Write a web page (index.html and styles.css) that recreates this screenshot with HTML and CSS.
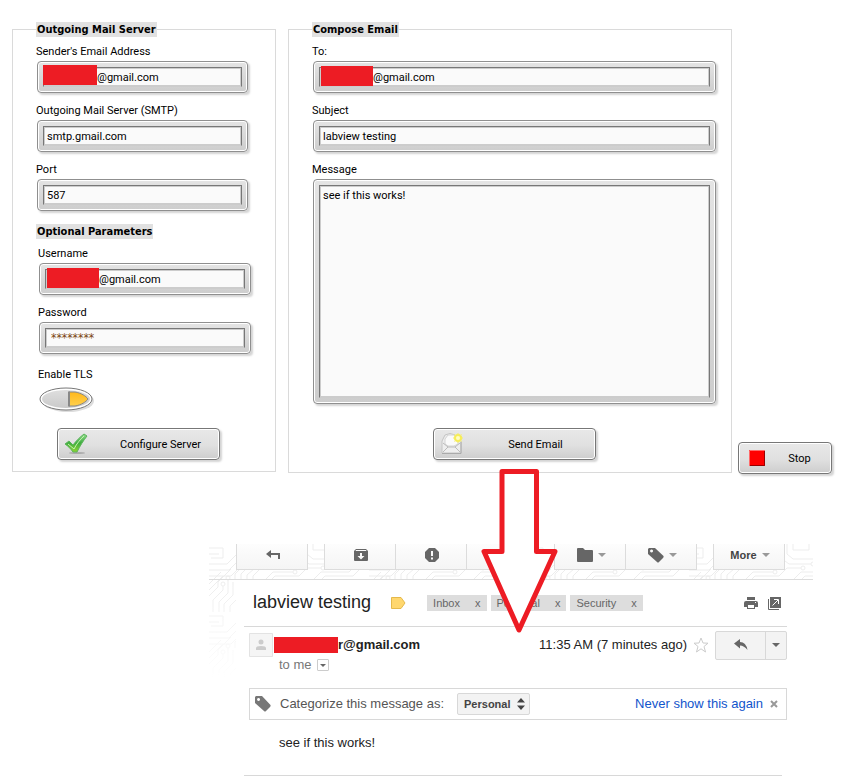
FILE: index.html
```html
<!DOCTYPE html>
<html lang="en">
<head>
    <meta charset="UTF-8">
    <meta name="viewport" content="width=device-width, initial-scale=1.0">
    <title>Email Client</title>
    <link rel="stylesheet" href="styles.css">
</head>
<body>

    <form class="client">
        <!-- Server settings -->
        <fieldset class="panel server">
            <legend>Outgoing Mail Server</legend>
            <label for="sender">Sender's Email Address</label>
            <div class="field wide-redact"><input class="redacted" type="text" id="sender" value="@gmail.com"><span class="redact"></span></div>

            <label for="smtp">Outgoing Mail Server (SMTP)</label>
            <div class="field"><input type="text" id="smtp" value="smtp.gmail.com"></div>

            <label for="port">Port</label>
            <div class="field"><input type="text" id="port" value="587"></div>

            <h3>Optional Parameters</h3>
            <div class="optional">
                <label for="username">Username</label>
                <div class="field"><input class="redacted" type="text" id="username" value="@gmail.com"><span class="redact"></span></div>

                <label for="password">Password</label>
                <div class="field"><input class="secret" type="text" id="password" value="********"></div>

                <label class="tls" for="tls">Enable TLS</label>
                <div class="toggle">
                    <svg width="58" height="28" viewBox="0 0 58 28">
                        <defs>
                            <linearGradient id="metal" x1="0" y1="0" x2="0" y2="1">
                                <stop offset="0" stop-color="#dedede"/><stop offset="1" stop-color="#cacaca"/>
                            </linearGradient>
                            <linearGradient id="amber" x1="0" y1="0" x2="0" y2="1">
                                <stop offset="0" stop-color="#ffb81c"/><stop offset="1" stop-color="#ffd04d"/>
                            </linearGradient>
                        </defs>
                        <ellipse cx="30" cy="14" rx="26" ry="11" fill="#ddd"/>
                        <ellipse cx="28" cy="12" rx="26" ry="11" fill="#fff" stroke="#777"/>
                        <ellipse cx="28" cy="12" rx="24" ry="9" fill="url(#metal)"/>
                        <path d="M31 5V19H37C43 18 48 15 50 12C48 9 43 6 37 5Z" fill="url(#amber)" stroke="#888"/>
                        <path d="M31 4.500V19.500" stroke="#888" stroke-width="2"/>
                    </svg>
                    <input type="checkbox" id="tls" checked>
                </div>
            </div>
            <button class="action" type="button">
                <svg class="check" width="26" height="24" viewBox="0 0 26 24">
                    <defs>
                        <linearGradient id="green" x1="0" y1="0" x2="0" y2="1">
                            <stop offset="0" stop-color="#8fdc8f"/><stop offset="0.500" stop-color="#3fae3f"/><stop offset="1" stop-color="#8fd630"/>
                        </linearGradient>
                    </defs>
                    <ellipse cx="14" cy="21" rx="8" ry="1" fill="#aaa"/>
                    <path d="M2 12L6 9L10 13C13 9 17 5 21 2L24 4C20 9 17 14 14 20L10 20C8 17 5 14 2 12Z" fill="url(#green)" stroke="#5cb35c"/>
                    <path d="M5 12L11 17C14 11 17 8 21 4" fill="none" stroke="#c9f2b0"/>
                </svg>
                <span>Configure Server</span>
            </button>
        </fieldset>

        <!-- Message -->
        <fieldset class="panel compose">
            <legend>Compose Email</legend>
            <label for="to">To:</label>
            <div class="field"><input class="redacted" type="text" id="to" value="@gmail.com"><span class="redact"></span></div>

            <label for="subject">Subject</label>
            <div class="field"><input type="text" id="subject" value="labview testing"></div>

            <label for="message">Message</label>
            <div class="field"><textarea id="message">see if this works!</textarea></div>

            <button class="action" type="button">
                <svg width="24" height="24" viewBox="0 0 24 24">
                    <path d="M3 9L6 3Q11 0 16 3L22 9V21H3Z" fill="#eee" stroke="#c4c4c4"/>
                    <path d="M6 7L9 3H15L19 7V12L15 14H9L6 12Z" fill="#fafafa" stroke="#d4d4d4"/>
                    <path d="M4 11L9 15H16L21 11M4 20L9 15M21 20L16 15" fill="none" stroke="#bbb"/>
                    <path d="M3 21.500H22V10" fill="none" stroke="#aaa"/>
                    <circle cx="19" cy="6" r="4" fill="#f7ee4e"/>
                    <path d="M19 1V11M14 6H24M15.500 2.500L22.500 9.500M22.500 2.500L15.500 9.500" stroke="#f5ec6a"/>
                    <circle cx="19" cy="6" r="2" fill="#fffdc0"/>
                </svg>
                <span>Send Email</span>
            </button>
        </fieldset>

        <button class="action stop" type="button">
            <svg width="16" height="16" viewBox="0 0 16 16">
                <path d="M0 0H16V16H0Z" fill="#f00"/>
                <path d="M15.500 0V15.500H0" fill="none" stroke="#900"/>
                <path d="M0.500 16V0.500H16" fill="none" stroke="#ff6a6a"/>
            </svg>
            <span>Stop</span>
        </button>
    </form>

    <!-- Received mail -->
    <section class="mail">
        <svg class="circuit" width="100%" height="134">
            <defs>
                <pattern id="traces" width="160" height="68" patternUnits="userSpaceOnUse">
                    <g fill="none" stroke="#ededed">
                        <path d="M0 4H14V14H2M0 10H10M0 20H18L28 10V0M0 26H20L32 14V0M0 32H22L36 18V0"/>
                        <path d="M26 36V30L34 22M32 36V30L40 22M38 36V31L46 24M44 36V32L54 22H70"/>
                        <path d="M56 36L64 28H84M62 36L66 32H90L98 24H112M42 0V12L50 18H78L86 10V0M48 0V8L54 13H74L80 7V0"/>
                        <path d="M92 0V14L100 20H122M98 0V10L104 15H128L136 7V0M104 0V6H120V0M104 36L112 28H140L148 20H160"/>
                        <path d="M112 36L116 32H144L152 24H160M142 0V10L150 14H160M148 0V6H160"/>
                        <path d="M0 40L12 28M0 46L14 32M0 52L9 43V38L22 25M4 68V56L14 46V42M10 68V58L19 49V36M15 68V60L24 51V38M21 68V62L27 56"/>
                        <circle cx="41" cy="21" r="2"/><circle cx="35" cy="21" r="2"/><circle cx="48" cy="23" r="2"/><circle cx="72" cy="22" r="2"/>
                        <circle cx="86" cy="28" r="2"/><circle cx="114" cy="24" r="2"/><circle cx="124" cy="20" r="2"/><circle cx="14" cy="40" r="2"/><circle cx="19" cy="34" r="2"/>
                    </g>
                </pattern>
                <linearGradient id="fade" x1="0" y1="0" x2="0" y2="1">
                    <stop offset="0" stop-color="#fff" stop-opacity="0"/><stop offset="1" stop-color="#fff"/>
                </linearGradient>
            </defs>
            <rect width="100%" height="36" fill="url(#traces)"/>
            <rect y="36" width="27" height="98" fill="url(#traces)"/>
            <rect y="36" width="27" height="98" fill="url(#fade)"/>
        </svg>

        <div class="toolbar">
            <div class="tools">
                <button type="button" aria-label="Back"><svg width="14" height="10" viewBox="0 0 14 10"><path d="M0 4L5 0V3H14V9H12V5H5V8Z" fill="#666"/></svg></button>
            </div>
            <div class="tools">
                <button type="button" aria-label="Archive"><svg width="14" height="14" viewBox="0 0 14 14"><path d="M2 1H12L14 3V12Q14 13 13 13H1Q0 13 0 12V3ZM2 2L1.500 3H12.500L12 2ZM6 5V8H3.500L7 11.500L10.500 8H8V5Z" fill="#666" fill-rule="evenodd"/></svg></button>
                <button type="button" aria-label="Report spam"><svg width="14" height="14" viewBox="0 0 14 14"><path d="M4 0H10L14 4V10L10 14H4L0 10V4ZM6 3V8H8V3ZM6 9.500V11.500H8V9.500Z" fill="#666" fill-rule="evenodd"/></svg></button>
                <button type="button" aria-label="Delete"></button>
            </div>
            <div class="tools">
                <button type="button" aria-label="Move to">
                    <svg width="16" height="14" viewBox="0 0 16 14"><path d="M1 0H6L8 2H15Q16 2 16 3V13Q16 14 15 14H1Q0 14 0 13V1Q0 0 1 0Z" fill="#666"/></svg>
                    <i class="caret"></i>
                </button>
                <button type="button" aria-label="Labels">
                    <svg width="16" height="16" viewBox="0 0 16 16"><path d="M1 1H7L15.500 9Q16 10 15 11L11 15Q10 16 9 15L0 7V2ZM3.500 2.500A1.500 1.500 0 1 0 3.600 2.500Z" fill="#666" fill-rule="evenodd"/></svg>
                    <i class="caret"></i>
                </button>
            </div>
            <div class="tools">
                <button type="button">More <i class="caret"></i></button>
            </div>
        </div>

        <div class="subject">
            <h2>labview testing</h2>
            <svg class="marker" width="15" height="12" viewBox="0 0 15 12"><path d="M0.500 0.500H10L14 6L10 11.500H0.500Z" fill="#ffd76e" stroke="#e5b94b"/></svg>
            <div class="chips">
                <a href="#">Inbox <b>x</b></a>
                <a href="#">Personal <b>x</b></a>
                <a href="#">Security <b>x</b></a>
            </div>
            <svg class="print" width="14" height="13" viewBox="0 0 14 13"><path d="M3 0H11V3H3ZM2 4H12Q14 4 14 6V10H11V7H3V10H0V6Q0 4 2 4ZM3 7H11V12H3Z" fill="#666"/><path d="M4 8H10V11H4Z" fill="#fff"/><path d="M11 5H12V6H11Z" fill="#fff"/></svg>
            <svg width="13" height="13" viewBox="0 0 13 13"><path d="M2 0H13V11H2Z" fill="#666"/><path d="M0.500 2V12.500H11" fill="none" stroke="#666"/><path d="M4.500 8.500L10 3M6 2.500H10.500V7" fill="none" stroke="#fff"/></svg>
        </div>

        <div class="sender">
            <svg class="avatar" width="24" height="24" viewBox="0 0 24 24"><path d="M0.500 0.500H23.500V23.500H0.500Z" fill="#f5f5f5" stroke="#e3e3e3"/><circle cx="12" cy="9" r="2.500" fill="#ccc"/><path d="M7 17V15Q7 13 12 13Q17 13 17 15V17Z" fill="#ccc"/></svg>
            <span class="block"></span>
            <strong>r@gmail.com</strong>
            <span class="time">11:35 AM (7 minutes ago)</span>
            <svg class="star" width="16" height="16" viewBox="0 0 16 16"><path d="M8 1L10 6L15 6.200L11 9.500L12.500 15L8 11.800L3.500 15L5 9.500L1 6.200L6 6Z" fill="#fff" stroke="#ccc"/></svg>
            <div class="reply">
                <button type="button" aria-label="Reply"><svg width="14" height="12" viewBox="0 0 14 12"><path d="M0 4.500L6 0V3Q12 3 13.500 11Q10 6.500 6 6.500V9.500Z" fill="#666"/></svg></button>
                <button type="button" aria-label="More replies"><i class="caret"></i></button>
            </div>
        </div>
        <div class="recipient">to me <button type="button" aria-label="Show details"><i class="caret"></i></button></div>

        <div class="categorize">
            <svg width="16" height="16" viewBox="0 0 16 16"><path d="M1 0H7L15.500 9Q16 10 15 11L11 15Q10 16 9 15L0 7V1ZM3.500 2A1.500 1.500 0 1 0 3.600 2Z" fill="#777" fill-rule="evenodd"/></svg>
            <label for="category">Categorize this message as:</label>
            <div class="picker">
                <select id="category"><option>Personal</option></select>
                <svg width="8" height="12" viewBox="0 0 8 12"><path d="M0 4.500L4 0L8 4.500ZM0 7.500L4 12L8 7.500Z" fill="#444"/></svg>
            </div>
            <a href="#">Never show this again</a>
            <button type="button" aria-label="Dismiss"><svg width="8" height="8" viewBox="0 0 8 8"><path d="M1 1L7 7M7 1L1 7" stroke="#999" stroke-width="2"/></svg></button>
        </div>

        <p class="message">see if this works!</p>

        <svg class="arrow" width="80" height="170" viewBox="0 0 80 170"><path d="M22 4.500H56.500V84.500H75L39 163L4 84.500H22Z" fill="#fff" stroke="#ed1c24" stroke-width="5" stroke-linejoin="round"/></svg>
    </section>

</body>
</html>
```

FILE: styles.css
```css
* { box-sizing: border-box; }
body { margin: 0; background: #fff; font: 13px/16px "Liberation Sans", Arial, sans-serif; color: #222; }
button, input, select, textarea { font: inherit; color: inherit; margin: 0; }
svg { display: block; flex: none; }

/* mail client */
.client { display: flex; align-items: flex-start; padding: 22px 18px 0 12px; font: 11px/16px Tahoma, Roboto, sans-serif; color: #000; }
.panel { margin: 0; border: 1px solid #dadada; }
.server { flex: 0 0 264px; height: 450px; padding: 6px 27px 0 23px; margin-right: 12px; }
.compose { flex: 1; min-width: 0; height: 451px; padding: 6px 15px 0 23px; margin-right: 6px; }
.panel legend, .panel h3 { padding: 0 1px; background: #e1e1e1; font: bold 11px/15px Tahoma, "DejaVu Sans Condensed", sans-serif; }
.panel legend { margin-bottom: 1px; }
.panel h3 { width: fit-content; margin: 13px 0 7px; }
.panel label { display: block; height: 17px; line-height: 16px; }
.optional { padding-left: 2px; margin-right: -3px; }

.field { position: relative; margin: 0 0 10px 1px; height: 32px; padding: 5px; border: 1px solid #8f8f8f; border-radius: 4px; background: linear-gradient(#e4e4e4, #cdcdcd); box-shadow: inset 0 0 0 1px #fff, 2px 2px 2px #d4d4d4; }
.field input, .field textarea { display: block; width: 100%; height: 100%; padding: 0 3px; border: 1px solid #777; border-bottom-color: #ccc; border-radius: 0; background: #fafafa; box-shadow: inset 0 0 0 1px #ccc; }
.field textarea { height: 213px; padding-top: 2px; resize: none; }
.field:has(textarea) { height: 225px; }
.field .redacted { padding-left: 53px; }
.field .secret { padding: 0 0 1px 5px; font-family: "DejaVu Sans Condensed", sans-serif; font-size: 12px; color: #7a4510; }
.redact { position: absolute; left: 7px; top: 4px; width: 52px; height: 20px; background: #ed1c24; }
.wide-redact .redact { left: 5px; top: 3px; width: 54px; }

.panel .tls { margin-top: 13px; margin-bottom: 3px; }
.toggle { position: relative; width: 58px; height: 28px; }
.toggle input { position: absolute; inset: 0; width: 100%; height: 100%; opacity: 0; }

.action { display: flex; align-items: center; width: 163px; height: 32px; padding: 2px 5px 0; border: 1px solid #777; border-radius: 4px; background: linear-gradient(#e8e8e8, #e0e0e0 55%, #cdcdcd); box-shadow: inset 0 0 0 1px #fff, 2px 2px 2px #d4d4d4; }
.action svg { margin-top: -2px; }
.action span { flex: 1; text-align: center; padding-left: 18px; }
.server .action { margin: 13px 0 0 21px; }
.compose .action { margin: 24px auto 0 121px; }
.stop { width: 94px; margin-top: 420px; padding-left: 10px; }
.stop span { padding-left: 8px; }

/* received mail */
.mail { position: relative; margin: 70px 37px 0 209px; }
.circuit { position: absolute; left: 0; top: 0; z-index: -1; }
.toolbar { display: flex; gap: 16px; height: 36px; padding: 0 28px 0 27px; border-bottom: 1px solid #dcdcdc; }
.tools { display: flex; height: 26px; border: 1px solid #dcdcdc; border-top: 0; background: linear-gradient(#fdfdfd, #f5f5f5); }
.tools button { display: flex; align-items: center; justify-content: center; gap: 5px; width: 71px; padding: 0 0 4px 2px; border: 0; border-right: 1px solid #dcdcdc; background: none; font-size: 11px; font-weight: bold; color: #444; }
.tools button:last-child { width: 70px; border-right: 0; }
.caret { border: 4px solid transparent; border-top-color: #999; border-bottom: 0; }

.subject { display: flex; align-items: center; height: 47px; margin: 0 26px 0 35px; padding: 0 6px 0 9px; border-bottom: 1px solid #d8d8d8; }
.subject h2 { margin: 0 20px 2px 0; font-size: 18px; line-height: 24px; font-weight: normal; }
.marker { margin-right: 21px; }
.chips { display: flex; gap: 4px; margin-right: auto; }
.chips a { display: flex; gap: 15px; height: 16px; padding: 0 6px; background: #ddd; font-size: 11px; color: #666; text-decoration: none; }
.chips b { font-weight: normal; }
.print { margin-right: 10px; }

.sender { display: flex; align-items: center; height: 36px; margin: 0 26px 0 40px; }
.block { width: 64px; height: 16px; margin-left: 1px; background: #ed1c24; }
.time { margin-left: auto; }
.star { margin: 0 6px; }
.reply { display: flex; height: 29px; border: 1px solid #d8d8d8; border-radius: 2px; background: #f3f3f3; }
.reply button { display: flex; align-items: center; justify-content: center; width: 49px; padding: 0; border: 0; background: none; }
.reply button + button { width: 21px; border-left: 1px solid #d8d8d8; }
.reply .caret, .recipient .caret { border-top-color: #666; }

.recipient { display: flex; align-items: center; gap: 5px; height: 16px; margin-left: 70px; margin-top: -6px; color: #777; }
.recipient button { display: flex; align-items: center; justify-content: center; width: 12px; height: 12px; padding: 0; border: 1px solid #ccc; border-radius: 1px; background: #fff; }
.recipient .caret { border-width: 3px 3px 0; }

.categorize { display: flex; align-items: center; height: 32px; margin: 15px 26px 0 40px; padding: 0 8px 0 5px; border: 1px solid #d8d8d8; color: #555; }
.categorize label { margin: 0 13px 0 9px; }
.picker { position: relative; }
.picker select { display: block; width: 73px; height: 22px; padding: 0 6px; border: 1px solid #d8d8d8; border-radius: 2px; background: #f3f3f3; font-size: 11px; font-weight: bold; color: #444; appearance: none; }
.picker svg { position: absolute; right: 5px; top: 5px; pointer-events: none; }
.categorize a { margin-left: auto; color: #15c; text-decoration: none; }
.categorize button { padding: 0; margin-left: 7px; border: 0; background: none; }
.message { margin: 0 31px 0 35px; padding: 15px 35px 24px; border-bottom: 1px solid #d8d8d8; }
.arrow { position: absolute; left: 271px; top: -77px; }
```
